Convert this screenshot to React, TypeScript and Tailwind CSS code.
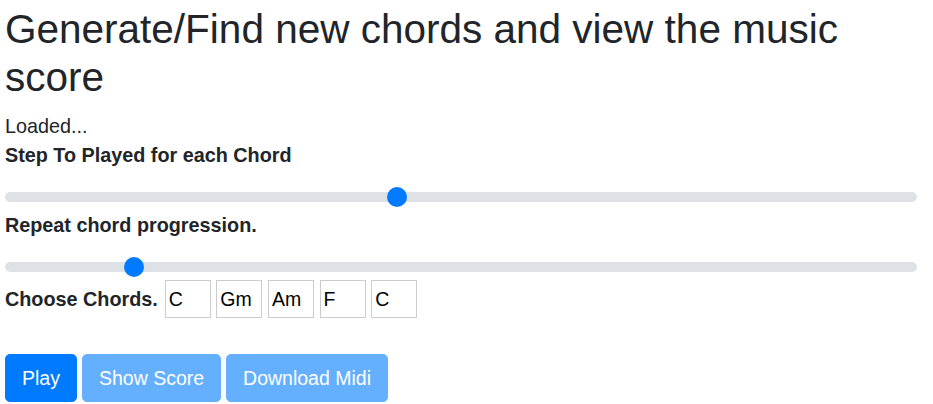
import { useState } from "react";

const CHORDS = ["C", "Gm", "Am", "F", "C"];

function RangeSlider({ value, max }: { value: number; max: number }) {
  // thumb is 20px wide, so its left edge runs over (width - 20)
  const pct = value / max;
  return (
    <div className="relative flex h-5 w-full items-center">
      <div className="h-[10px] w-full rounded-full bg-[#dee2e6]" />
      <div
        className="absolute top-0 h-5 w-5 rounded-full bg-[#007bff]"
        style={{ left: `calc(${pct} * (100% - 20px))` }}
      />
    </div>
  );
}

export default function App() {
  const [chords, setChords] = useState<string[]>(CHORDS);

  return (
    <main
      className="min-h-screen bg-white pt-[5px] pl-[5px] pr-[16px] text-[#212529]"
      style={{ fontFamily: '"Liberation Sans", Arial, sans-serif' }}
    >
      <h1 className="mb-[10.5px] text-[40.5px] leading-[48px] font-normal">
        Generate/Find new chords and view the music score
      </h1>

      <div className="text-[19.8px] leading-[29px]">Loaded...</div>
      <label className="block text-[19.8px] leading-[29px] font-bold">
        Step To Played for each Chord
      </label>
      <div className="mt-[17.5px]">
        <RangeSlider value={382} max={892} />
      </div>

      <label className="mt-[3.5px] block text-[19.8px] leading-[29px] font-bold">
        Repeat chord progression.
      </label>
      <div className="mt-[17.5px]">
        <RangeSlider value={119} max={892} />
      </div>

      <div className="mt-[3px] flex items-center">
        <span className="mr-[7px] text-[19.8px] leading-[29px] font-bold">Choose Chords.</span>
        <div className="flex gap-[5.6px]">
          {chords.map((c, i) => (
            <input
              key={i}
              type="text"
              value={c}
              onChange={(e) => {
                const next = [...chords];
                next[i] = e.target.value;
                setChords(next);
              }}
              className="h-[38px] w-[46px] border border-[#cccccc] px-[3px] text-[19.5px] text-black outline-none"
            />
          ))}
        </div>
      </div>

      <div className="mt-[36px] flex gap-[5px]">
        <button className="rounded-[4.8px] border border-[#007bff] bg-[#007bff] px-4 py-2 text-[19.5px] leading-[30px] text-white">
          Play
        </button>
        <button
          disabled
          className="rounded-[4.8px] border border-[#007bff] bg-[#007bff] px-4 py-2 text-[19.5px] leading-[30px] text-white opacity-60"
        >
          Show Score
        </button>
        <button
          disabled
          className="rounded-[4.8px] border border-[#007bff] bg-[#007bff] px-4 py-2 text-[19.5px] leading-[30px] text-white opacity-60"
        >
          Download Midi
        </button>
      </div>
    </main>
  );
}
